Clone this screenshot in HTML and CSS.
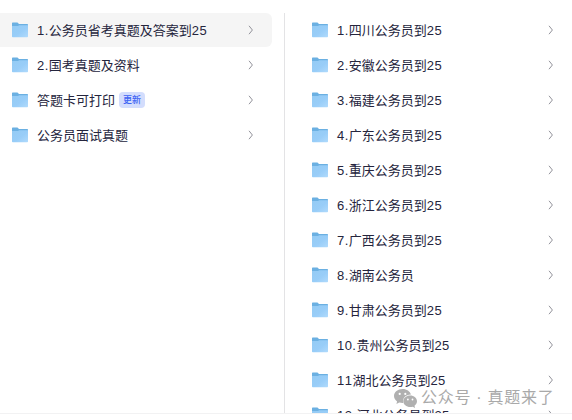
FILE: index.html
```
<!DOCTYPE html>
<html lang="zh-CN">
<head>
<meta charset="utf-8">
<title>文件列表</title>
<link rel="stylesheet" href="styles.css">
</head>
<body>
<svg class="defs" width="0" height="0" aria-hidden="true">
  <defs>
    <linearGradient id="front" x1="0" y1="0" x2="1" y2="1">
      <stop offset="0" stop-color="#94cbf4"/><stop offset=".55" stop-color="#98cdf8"/><stop offset="1" stop-color="#b0dafc"/>
    </linearGradient>
    <symbol id="folder" viewBox="0 0 17 16">
      <path d="M0 1.200Q0 .5.7.5H5.500L7 2H15.300Q16 2 16 2.700V8H0Z" fill="#6bb0e2"/>
      <path d="M0 4H6L7.200 3.300H16V14.500Q16 15.300 15.200 15.300H.8Q0 15.300 0 14.500Z" fill="url(#front)"/>
    </symbol>
    <symbol id="chevron" viewBox="0 0 6 10">
      <path d="M1 .8 4.400 5 1 9.200" fill="none" stroke="#92929a" stroke-width="1"/>
    </symbol>
  </defs>
</svg>
<main class="browser">
  <ul class="column column-left">
    <li class="row selected"><svg class="folder"><use href="#folder"/></svg><span class="name"><b>1.</b>公务员省考真题及答案到<b>25</b></span><svg class="chevron"><use href="#chevron"/></svg></li>
    <li class="row"><svg class="folder"><use href="#folder"/></svg><span class="name"><b>2.</b>国考真题及资料</span><svg class="chevron"><use href="#chevron"/></svg></li>
    <li class="row"><svg class="folder"><use href="#folder"/></svg><span class="name">答题卡可打印</span><span class="tag">更新</span><svg class="chevron"><use href="#chevron"/></svg></li>
    <li class="row"><svg class="folder"><use href="#folder"/></svg><span class="name">公务员面试真题</span><svg class="chevron"><use href="#chevron"/></svg></li>
  </ul>
  <ul class="column column-right">
    <li class="row"><svg class="folder"><use href="#folder"/></svg><span class="name"><b>1.</b>四川公务员到<b>25</b></span><svg class="chevron"><use href="#chevron"/></svg></li>
    <li class="row"><svg class="folder"><use href="#folder"/></svg><span class="name"><b>2.</b>安徽公务员到<b>25</b></span><svg class="chevron"><use href="#chevron"/></svg></li>
    <li class="row"><svg class="folder"><use href="#folder"/></svg><span class="name"><b>3.</b>福建公务员到<b>25</b></span><svg class="chevron"><use href="#chevron"/></svg></li>
    <li class="row"><svg class="folder"><use href="#folder"/></svg><span class="name"><b>4.</b>广东公务员到<b>25</b></span><svg class="chevron"><use href="#chevron"/></svg></li>
    <li class="row"><svg class="folder"><use href="#folder"/></svg><span class="name"><b>5.</b>重庆公务员到<b>25</b></span><svg class="chevron"><use href="#chevron"/></svg></li>
    <li class="row"><svg class="folder"><use href="#folder"/></svg><span class="name"><b>6.</b>浙江公务员到<b>25</b></span><svg class="chevron"><use href="#chevron"/></svg></li>
    <li class="row"><svg class="folder"><use href="#folder"/></svg><span class="name"><b>7.</b>广西公务员到<b>25</b></span><svg class="chevron"><use href="#chevron"/></svg></li>
    <li class="row"><svg class="folder"><use href="#folder"/></svg><span class="name"><b>8.</b>湖南公务员</span><svg class="chevron"><use href="#chevron"/></svg></li>
    <li class="row"><svg class="folder"><use href="#folder"/></svg><span class="name"><b>9.</b>甘肃公务员到<b>25</b></span><svg class="chevron"><use href="#chevron"/></svg></li>
    <li class="row"><svg class="folder"><use href="#folder"/></svg><span class="name"><b>10.</b>贵州公务员到<b>25</b></span><svg class="chevron"><use href="#chevron"/></svg></li>
    <li class="row"><svg class="folder"><use href="#folder"/></svg><span class="name"><b>11</b>湖北公务员到<b>25</b></span><svg class="chevron"><use href="#chevron"/></svg></li>
    <li class="row"><svg class="folder"><use href="#folder"/></svg><span class="name"><b>12.</b>河北公务员到<b>25</b></span><svg class="chevron"><use href="#chevron"/></svg></li>
  </ul>
</main>
<div class="watermark">
  <svg class="wechat" viewBox="0 0 23 19">
    <path d="M8.6 0C3.8 0 0 3.1 0 7c0 2.200 1.200 4.100 3.100 5.400L2.400 15l2.900-1.500c1 .3 2.100.5 3.300.5h.6C8.100 9.400 11.800 5.500 17 5.600 16.100 2.300 12.700 0 8.600 0Z" fill="#b0b0b0"/>
    <path d="M16.200 6.500c-3.900 0-6.900 2.600-6.900 5.800s3 5.800 6.900 5.800c.9 0 1.700-.1 2.500-.4l2.400 1.200-.6-2.100c1.500-1.100 2.500-2.700 2.500-4.500 0-3.200-3-5.800-6.800-5.800Z" fill="#b0b0b0"/>
    <g fill="#fff"><circle cx="5.700" cy="4.900" r="1.100"/><circle cx="11.300" cy="4.900" r="1.100"/><circle cx="13.900" cy="10.500" r=".9"/><circle cx="18.500" cy="10.500" r=".9"/></g>
  </svg>
  <span>公众号<i>·</i>真题来了</span>
</div>
</body>
</html>
```
FILE: styles.css
```
* { box-sizing: border-box; }
body {
  margin: 0;
  height: 420px;
  overflow: hidden;
  background: #fff;
  color: #25253d;
  font: 13px/20px "Liberation Sans", "Noto Sans CJK SC", sans-serif;
}
.defs { position: absolute; }
.browser {
  display: grid;
  grid-template-columns: 285px 1fr;
  height: 414px;
  padding-top: 13px;
  border-bottom: 1px solid #f2f2f3;
  overflow: hidden;
}
.column {
  display: flex;
  flex-direction: column;
  gap: 1px;
  min-height: 0;
  margin: 0;
  padding: 0;
  list-style: none;
}
.column-left { padding-right: 12px; border-right: 1px solid #e3e3e5; }
.column-right { padding-left: 15px; }
.row {
  display: flex;
  flex: none;
  align-items: center;
  height: 34px;
  padding: 0 18px 0 12px;
  white-space: nowrap;
}
.selected { background: #f5f5f5; border-radius: 0 6px 6px 0; }
.folder { flex: none; width: 17px; height: 16px; margin-right: 8px; }
.name { padding-top: 1px; font-kerning: none; }
.name b { font-weight: 400; letter-spacing: 0.45px; }
.row .name { line-height: 21px; }
.chevron { flex: none; width: 6px; height: 10px; margin-left: auto; }
.tag {
  margin-left: 4px;
  width: 26px;
  height: 16px;
  border-radius: 4px;
  background: #d3ddfd;
  color: #3e64f4;
  font-size: 9px;
  font-weight: 500;
  line-height: 16px;
  text-align: center;
}
.watermark {
  position: absolute;
  left: 394px;
  top: 387px;
  display: flex;
  align-items: center;
  gap: 4px;
  height: 22px;
  color: #a9a9a9;
  font-size: 16px;
  letter-spacing: 0.8px;
  white-space: nowrap;
}
.watermark i { display: inline-block; width: 16px; font-style: normal; text-align: center; }
.wechat { width: 23px; height: 19px; }
```
